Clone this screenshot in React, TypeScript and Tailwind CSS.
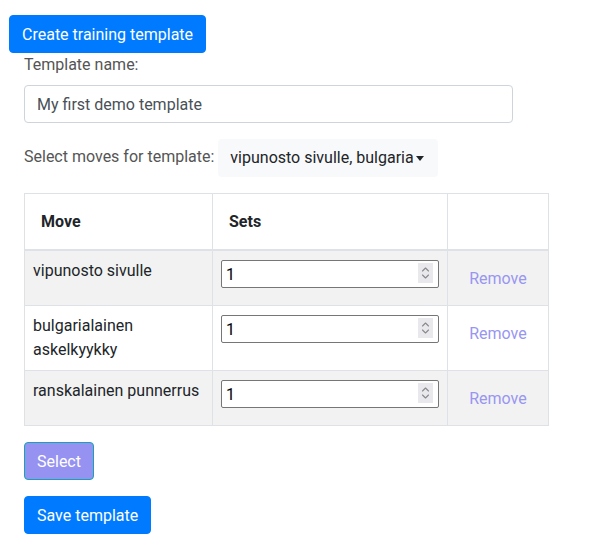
import React from 'react';

const moves = [
    { name: 'vipunosto sivulle', sets: '1' },
    { name: 'bulgarialainen askelkyykky', sets: '1' },
    { name: 'ranskalainen punnerrus', sets: '1' },
];

function Spinner() {
    return (
        <span className="absolute right-[6px] top-[3px] w-[15px] h-[20px] bg-[#e9e9ed] flex items-center justify-center">
            <svg width="9" height="14" viewBox="0 0 9 14" fill="none" stroke="#8a8a8a" strokeWidth="1.1" strokeLinecap="round" strokeLinejoin="round">
                <path d="M1.5 5 L4.5 2 L7.5 5" />
                <path d="M1.5 9 L4.5 12 L7.5 9" />
            </svg>
        </span>
    );
}

export default function App() {
    return (
        <div className="min-h-[554px] bg-white text-[#212529] text-[16px] leading-6 font-['Roboto','Liberation_Sans',sans-serif] pt-[15px]">
            {/* Create */}
            <div className="pl-[9px]">
                <button className="h-[38px] px-3 pt-[1px] rounded bg-[#007bff] text-white border border-[#007bff]">
                    Create training template
                </button>
            </div>

            <div className="pl-6">
                {/* Template name */}
                <div className="text-[#555]">Template name:</div>
                <input
                    className="mt-2 w-[489px] h-[38px] px-3 border border-[#ced4da] rounded text-[#495057] outline-none"
                    defaultValue="My first demo template"
                />

                {/* Moves select */}
                <div className="mt-4 flex items-center gap-1">
                    <span className="text-[#555] -mt-[2px]">Select moves for template:</span>
                    <button className="w-[220px] h-[38px] pl-3 pr-[14px] rounded bg-[#f8f9fa] flex items-center">
                        <span className="flex-1 overflow-hidden whitespace-nowrap text-left">vipunosto sivulle, bulgarialainen askelkyykky, ranskalainen punnerrus</span>
                        <span className="ml-[3px] w-0 h-0 border-l-[4px] border-r-[4px] border-t-[5px] border-l-transparent border-r-transparent border-t-[#212529]" />
                    </button>
                </div>

                {/* Table */}
                <table className="mt-4 w-[525px] border-collapse border border-[#dee2e6]">
                    <thead>
                        <tr>
                            <th className="w-[188px] text-left font-bold px-4 pt-4 pb-[15px] border border-[#dee2e6] border-b-2">Move</th>
                            <th className="w-[235px] text-left font-bold px-4 pt-4 pb-[15px] border border-[#dee2e6] border-b-2">Sets</th>
                            <th className="border border-[#dee2e6] border-b-2" />
                        </tr>
                    </thead>
                    <tbody>
                        {moves.map((m, i) => (
                            <tr key={m.name} className={i % 2 === 0 ? 'bg-[#f2f2f2]' : 'bg-white'}>
                                <td className="align-top p-2 border border-[#dee2e6]">{m.name}</td>
                                <td className="align-top p-2 border border-[#dee2e6]">
                                    <div className="relative mt-[1px]">
                                        <input
                                            className="block w-full h-[28px] px-[4px] border border-[#767676] rounded-[2px] bg-white text-black outline-none"
                                            defaultValue={m.sets}
                                        />
                                        <Spinner />
                                    </div>
                                </td>
                                <td className="align-top p-2 border border-[#dee2e6]">
                                    <button className="block mx-auto h-[38px] px-3 pt-[2px] text-[#9896f1]">Remove</button>
                                </td>
                            </tr>
                        ))}
                    </tbody>
                </table>

                {/* Actions */}
                <button className="mt-4 block h-[38px] px-3 pt-[2px] rounded bg-[#9692f1] border border-[#17a2b8] text-white">
                    Select
                </button>
                <button className="mt-4 block h-[38px] px-3 pt-[2px] rounded bg-[#007bff] border border-[#007bff] text-white">
                    Save template
                </button>
            </div>
        </div>
    );
}
